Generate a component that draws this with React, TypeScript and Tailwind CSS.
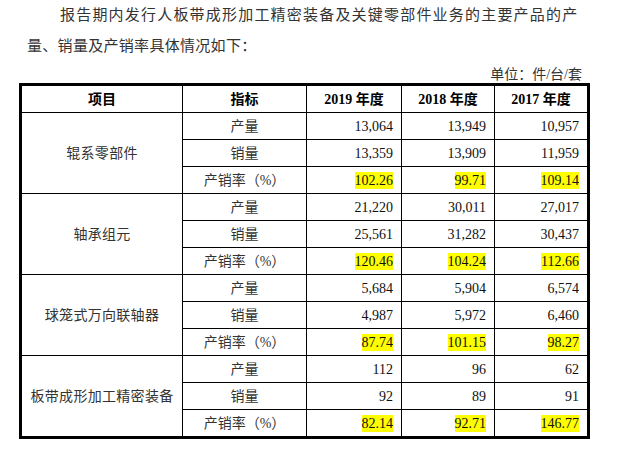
const groups = [
  {
    name: '辊系零部件',
    rows: [
      ['13,064', '13,949', '10,957'],
      ['13,359', '13,909', '11,959'],
      ['102.26', '99.71', '109.14'],
    ],
  },
  {
    name: '轴承组元',
    rows: [
      ['21,220', '30,011', '27,017'],
      ['25,561', '31,282', '30,437'],
      ['120.46', '104.24', '112.66'],
    ],
  },
  {
    name: '球笼式万向联轴器',
    rows: [
      ['5,684', '5,904', '6,574'],
      ['4,987', '5,972', '6,460'],
      ['87.74', '101.15', '98.27'],
    ],
  },
  {
    name: '板带成形加工精密装备',
    rows: [
      ['112', '96', '62'],
      ['92', '89', '91'],
      ['82.14', '92.71', '146.77'],
    ],
  },
]

const labels = ['产量', '销量', '产销率（%）']

export default function App() {
  return (
    <div className="h-[461px] w-[630px] overflow-hidden bg-white font-['Liberation_Serif','Noto_Sans_CJK_SC',serif] text-[#222]">
      <div className="ml-[19px] w-[571px]">
        <div className="pl-[8px] text-[15px] leading-[31px] text-[#333]">
          <p className="whitespace-nowrap pl-[33px] tracking-[1.2px]">
            报告期内发行人板带成形加工精密装备及关键零部件业务的主要产品的产
          </p>
          <p className="whitespace-nowrap tracking-[0.3px]">量、销量及产销率具体情况如下：</p>
        </div>
        <div className="h-[21px] pt-[4px] pr-[8px] text-right text-[14px] leading-[17px] text-[#333]">
          单位：件/台/套
        </div>
        <div className="grid grid-cols-[160px_123px_94px_92px_92px] auto-rows-[26px] gap-px border-[3px] border-black bg-black text-[14px]">
          <div className="flex items-center justify-center bg-white font-bold text-black">项目</div>
          <div className="flex items-center justify-center bg-white font-bold text-black">指标</div>
          <div className="flex items-center justify-center bg-white font-bold text-black">2019 年度</div>
          <div className="flex items-center justify-center bg-white font-bold text-black">2018 年度</div>
          <div className="flex items-center justify-center bg-white font-bold text-black">2017 年度</div>
          {groups.map((g) => (
            <>
              <div key={g.name} className="row-span-3 flex items-center justify-center bg-white tracking-[0.3px] text-[#333]">
                {g.name}
              </div>
              {g.rows.map((r, i) => (
                <>
                  <div key={g.name + i} className="flex items-center justify-center bg-white text-[#333]">
                    {labels[i]}
                  </div>
                  {r.map((v, j) => (
                    <div key={j} className="flex items-center justify-end bg-white pr-[8px] text-[#111]">
                      {i === 2 ? <span className="bg-[#ffff00] leading-[17px]">{v}</span> : v}
                    </div>
                  ))}
                </>
              ))}
            </>
          ))}
        </div>
      </div>
    </div>
  )
}
